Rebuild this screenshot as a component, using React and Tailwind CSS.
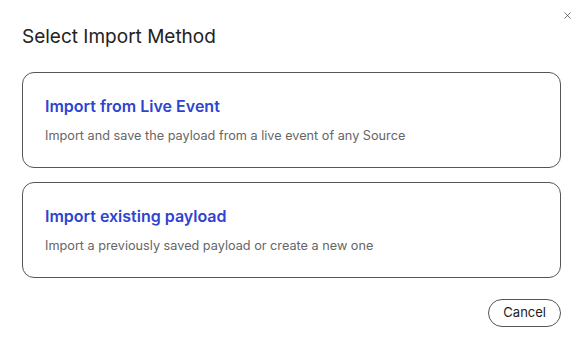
import { X } from "lucide-react"

const methods = [
  {
    title: "Import from Live Event",
    text: "Import and save the payload from a live event of any Source",
  },
  {
    title: "Import existing payload",
    text: "Import a previously saved payload or create a new one",
  },
]

const App = () => {
  return (
    <div
      className="relative w-[582px] h-[350px] bg-white text-[#222]"
      style={{ fontFamily: "Inter, 'Noto Sans', sans-serif" }}
    >
      {/* close button */}
      <button className="absolute right-[7px] top-[8px] p-0.5 text-[#444]">
        <X className="w-[11px] h-[11px]" strokeWidth={1.6} />
      </button>

      <div className="pl-[22px] pr-[21px] pt-[25px]">
        <h2 className="text-[19px] leading-[24px] font-normal">
          Select Import Method
        </h2>

        <div className="mt-[23px] flex flex-col gap-[14px]">
          {methods.map((m) => (
            <div
              key={m.title}
              className="h-[96px] w-full cursor-pointer border border-[#555] rounded-[12px] px-[22px] pt-[22px]"
            >
              <div className="text-[16px] leading-[22px] font-semibold text-[#2e44d0]">
                {m.title}
              </div>
              <div className="mt-[10px] text-[12.7px] leading-[18px] text-[#666]">
                {m.text}
              </div>
            </div>
          ))}
        </div>

        <div className="mt-[21px] flex justify-end">
          <button className="h-[28px] px-[14px] rounded-full border border-[#555] text-[13px] text-[#222]">
            Cancel
          </button>
        </div>
      </div>
    </div>
  )
}

export default App
